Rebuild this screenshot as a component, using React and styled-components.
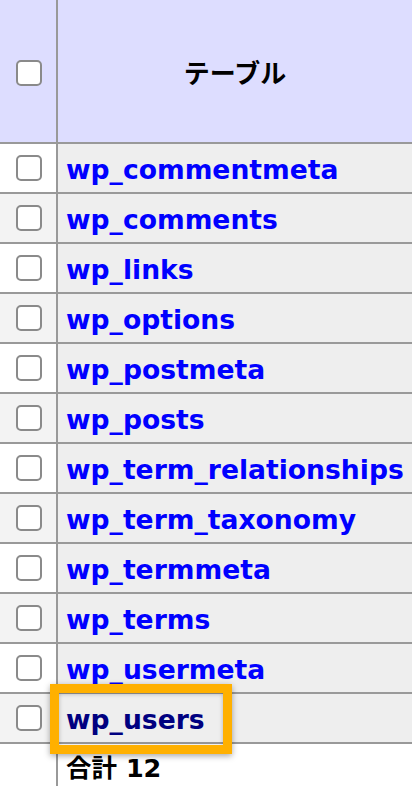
import React from "react";
import styled, { createGlobalStyle } from "styled-components";

const Global = createGlobalStyle`
  html, body { margin: 0; padding: 0; background: #fff; }
  body { font-family: "DejaVu Sans", Verdana, "Noto Sans CJK JP", sans-serif; overflow: hidden; }
`;

const Table = styled.table`
  border-collapse: collapse;
  width: 412px;
  table-layout: fixed;
`;

const HeadCell = styled.th`
  background: #ddddff;
  height: 142px;
  padding: 0;
  border-bottom: 2px solid #999;
  border-right: ${(p) => (p.$check ? "2px solid #999" : "none")};
  width: ${(p) => (p.$check ? "56px" : "auto")};
  text-align: center;
  font-family: "DejaVu Sans", "Noto Sans CJK JP", sans-serif;
  font-size: 26px;
  font-weight: bold;
  color: #000;
`;

const Cell = styled.td`
  height: ${(p) => (p.$check ? "48px" : "44px")};
  padding: ${(p) => (p.$check ? "0" : "4px 0 0 0")};
  border-bottom: 2px solid #999;
  border-right: ${(p) => (p.$check ? "2px solid #999" : "none")};
  background: ${(p) => (p.$check ? (p.$even ? "#f3f3f3" : "#ffffff") : "#eeeeee")};
  text-align: ${(p) => (p.$check ? "center" : "left")};
  vertical-align: middle;
  white-space: nowrap;
`;

const FootCell = styled.td`
  height: 42px;
  padding: 0 0 0 8px;
  border-right: ${(p) => (p.$check ? "2px solid #999" : "none")};
  background: #fff;
  font-family: "DejaVu Sans", "Noto Sans CJK JP", sans-serif;
  font-size: 25.5px;
  font-weight: bold;
  color: #000;
  vertical-align: middle;
  white-space: nowrap;
`;

const Box = styled.span`
  display: inline-block;
  width: 26px;
  height: 26px;
  box-sizing: border-box;
  border: 2px solid #8a8a8a;
  border-radius: 5px;
  background: #fff;
  vertical-align: middle;
  margin-left: 2px;
`;

const Name = styled.a`
  position: relative;
  display: inline-block;
  margin-left: 8px;
  font-family: "DejaVu Sans", Verdana, sans-serif;
  font-weight: bold;
  font-size: 26.6px;
  color: ${(p) => (p.$visited ? "#000080" : "#0000ff")};
  text-decoration: none;
  line-height: 1;
`;

const Highlight = styled.span`
  position: absolute;
  left: -16px;
  right: -27px;
  top: -23px;
  bottom: -21px;
  border: 9px solid #ffb000;
  box-shadow: 0 2px 6px rgba(0, 0, 0, 0.35), inset 0 1px 4px rgba(0, 0, 0, 0.25);
  pointer-events: none;
`;

const tables = [
  "wp_commentmeta",
  "wp_comments",
  "wp_links",
  "wp_options",
  "wp_postmeta",
  "wp_posts",
  "wp_term_relationships",
  "wp_term_taxonomy",
  "wp_termmeta",
  "wp_terms",
  "wp_usermeta",
  "wp_users",
];

export default function App() {
  return (
    <>
      <Global />
      <Table>
        <thead>
          <tr>
            <HeadCell $check>
              <Box />
            </HeadCell>
            <HeadCell>テーブル</HeadCell>
          </tr>
        </thead>
        <tbody>
          {tables.map((t, i) => {
            const last = t === "wp_users";
            return (
              <tr key={t}>
                <Cell $check $even={i % 2 === 1}>
                  <Box />
                </Cell>
                <Cell>
                  <Name href="#" $visited={last}>
                    {t}
                    {last && <Highlight />}
                  </Name>
                </Cell>
              </tr>
            );
          })}
          <tr>
            <FootCell $check />
            <FootCell>合計 12</FootCell>
          </tr>
        </tbody>
      </Table>
    </>
  );
}
